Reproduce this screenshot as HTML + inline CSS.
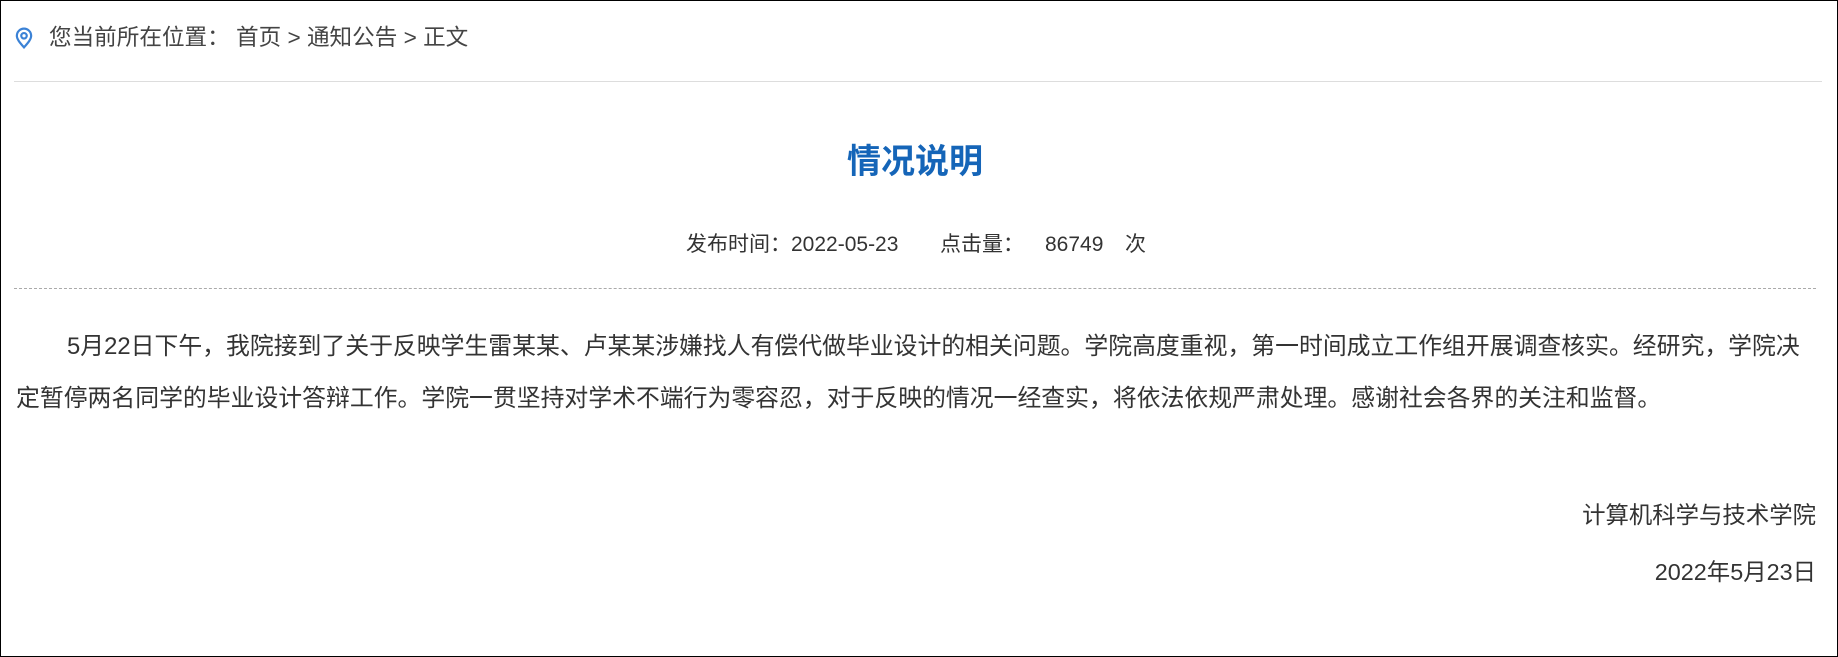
<!DOCTYPE html>
<html><head><meta charset="utf-8"><style>
html,body{margin:0;padding:0;}
body{width:1838px;height:657px;position:relative;overflow:hidden;background:#fff;font-family:"Liberation Sans","Noto Sans CJK SC",sans-serif;color:#333;}
.frame{position:absolute;left:0;top:0;width:1836px;height:655px;border:1px solid #000;}
.a{position:absolute;white-space:nowrap;}
</style></head><body>
<div class="frame"></div>
<svg class="a" style="left:14px;top:27px" width="20" height="22" viewBox="0 0 18 20"><path d="M9 18.5 C5 14 2.5 11 2.5 8 A6.5 6.5 0 0 1 15.5 8 C15.5 11 13 14 9 18.5Z" fill="none" stroke="#3b82d6" stroke-width="2"/><circle cx="9" cy="8" r="2.5" fill="none" stroke="#3b82d6" stroke-width="2"/></svg>
<div class="a" style="left:49px;top:23px;font-size:22.6px;line-height:30px;color:#444">您当前所在位置：&nbsp;首页 &gt; 通知公告 &gt; 正文</div>
<div class="a" style="left:14px;top:81px;width:1808px;height:1px;background:#ddd"></div>
<div class="a" style="left:615px;width:600px;text-align:center;top:142px;font-size:34px;line-height:40px;font-weight:bold;color:#1565b8">情况说明</div>
<div class="a" style="left:686px;top:232px;font-size:21px;line-height:26px;color:#333">发布时间：</div>
<div class="a" style="left:791px;top:232px;font-size:21px;line-height:26px;color:#333">2022-05-23</div>
<div class="a" style="left:940px;top:232px;font-size:21px;line-height:26px;color:#333">点击量：</div>
<div class="a" style="left:1045px;top:232px;font-size:21px;line-height:26px;color:#333">86749</div>
<div class="a" style="left:1125px;top:232px;font-size:21px;line-height:26px;color:#333">次</div>
<div class="a" style="left:14px;top:288px;width:1802px;border-top:1px dashed #aaa"></div>
<div class="a" style="left:16px;top:321px;font-size:23.85px;line-height:52px;color:#333">
<span style="padding-left:51px">5月22日下午，我院接到了关于反映学生雷某某、卢某某涉嫌找人有偿代做毕业设计的相关问题。学院高度重视，第一时间成立工作组开展调查核实。经研究，学院决</span><br>定暂停两名同学的毕业设计答辩工作。学院一贯坚持对学术不端行为零容忍，对于反映的情况一经查实，将依法依规严肃处理。感谢社会各界的关注和监督。</div>
<div class="a" style="right:22px;top:500px;font-size:23.4px;line-height:30px;color:#333">计算机科学与技术学院</div>
<div class="a" style="right:22px;top:557px;font-size:23.4px;line-height:30px;color:#333">2022年5月23日</div>
</body></html>
